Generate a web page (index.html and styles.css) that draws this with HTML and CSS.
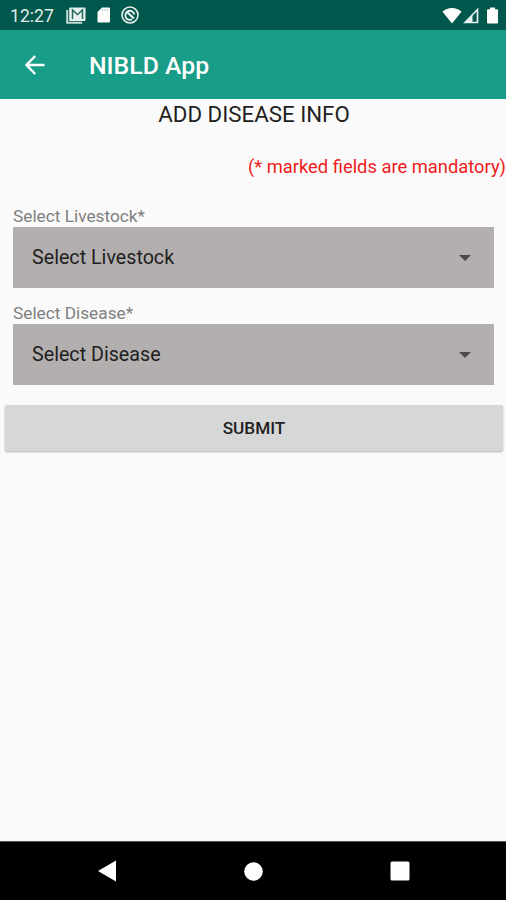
FILE: index.html
```
<!DOCTYPE html>
<html lang="en">

<head>
    <meta charset="UTF-8">
    <meta name="viewport" content="width=device-width, initial-scale=1.0">
    <title>NIBLD App</title>
    <link rel="stylesheet" href="styles.css">
</head>

<body>
    <div class="status-bar">
        <span class="clock">12:27</span>
        <svg class="icon-mail" width="20" height="17" viewBox="0 0 20 17">
            <path d="M1.2 3v12.8h15" fill="none" stroke="#c3dad6" stroke-width="2" />
            <rect x="3.2" y="0.5" width="16.3" height="13.5" rx="1" fill="#e6f0ee" />
            <path d="M6.5 12V3l5 4.500 5-4.500v9" fill="none" stroke="#22695f" stroke-width="1.5" />
        </svg>
        <svg class="icon-sd" width="14" height="16" viewBox="0 0 14 16">
            <path d="M5 0.5h7q1 0 1 1v13q0 1-1 1H1.5q-1 0-1-1V5z" fill="#fff" />
            <path d="M5.5 2v2M8 2v2M10.5 2v2" stroke="#a9c9c3" stroke-width="1" />
        </svg>
        <svg class="icon-sync" width="18" height="18" viewBox="0 0 18 18" fill="none" stroke="#e6f0ee">
            <circle cx="9" cy="9" r="8" stroke-width="1.6" />
            <path d="M11 13.300A4.500 4.500 0 1 1 13.300 8.500" stroke-width="2" />
            <path d="M6 6l7 6.500" stroke-width="2.2" />
        </svg>
        <div class="system-icons">
            <svg width="20" height="17" viewBox="0 0 20 17">
                <path d="M10 16.5L0.5 4.7Q4.5 1 10 1t9.5 3.7z" fill="#fff" />
            </svg>
            <svg class="icon-signal" width="16" height="17" viewBox="0 0 16 17">
                <path d="M2 15.5L14.5 2.5v13z" fill="none" stroke="#e6f0ee" stroke-width="1.7" />
                <path d="M9.5 8v7.5H2.5z" fill="#e6f0ee" />
            </svg>
            <svg class="icon-battery" width="11" height="17" viewBox="0 0 11 17">
                <path d="M3 0.5h5v1.7h2q1 0 1 1V15.5q0 1-1 1H1q-1 0-1-1V3.2q0-1 1-1h2z" fill="#fff" />
            </svg>
        </div>
    </div>

    <header class="app-bar">
        <svg class="back" width="20" height="20" viewBox="0 0 20 20">
            <path d="M19.5 10H2M10.2 1L1.5 10l8.7 9" fill="none" stroke="#fff" stroke-width="2.4" />
        </svg>
        <h1>NIBLD App</h1>
    </header>

    <main>
        <h2>ADD DISEASE INFO</h2>
        <p class="note">(* marked fields are mandatory)</p>

        <div class="field">
            <label>Select Livestock*</label>
            <div class="spinner">
                <span>Select Livestock</span>
                <svg width="12" height="6" viewBox="0 0 12 6">
                    <path d="M0 0h12L6 6z" fill="#4b4949" />
                </svg>
            </div>
        </div>

        <div class="field">
            <label>Select Disease*</label>
            <div class="spinner">
                <span>Select Disease</span>
                <svg width="12" height="6" viewBox="0 0 12 6">
                    <path d="M0 0h12L6 6z" fill="#4b4949" />
                </svg>
            </div>
        </div>

        <button class="submit">SUBMIT</button>
    </main>

    <nav class="nav-bar">
        <svg width="19" height="22" viewBox="0 0 19 22">
            <path d="M18 0.5v21L0 11z" fill="#fff" />
        </svg>
        <svg width="19" height="19" viewBox="0 0 19 19">
            <circle cx="9.5" cy="9.5" r="9.3" fill="#fff" />
        </svg>
        <svg width="20" height="20" viewBox="0 0 20 20">
            <rect x="0.5" y="0.5" width="19" height="19" rx="1.5" fill="#fff" />
        </svg>
    </nav>
</body>

</html>
```
FILE: styles.css
```
* {
    box-sizing: border-box;
}

body {
    font-family: Roboto, sans-serif;
    background: #fafafa;
    color: #1f1f1f;
    margin: 0;
    height: 900px;
    display: flex;
    flex-direction: column;
    overflow: hidden;
}

svg {
    display: block;
    flex: none;
}

.status-bar {
    background: #00574b;
    height: 30px;
    display: flex;
    align-items: center;
    padding: 0 8px 0 10px;
}

.clock {
    color: #e0ecea;
    width: 56px;
    font-size: 17.6px;
    line-height: 30px;
    padding-top: 2px;
}

.icon-sd {
    margin-left: 11px;
}

.icon-sync {
    margin-left: 10px;
}

.system-icons {
    display: flex;
    margin-left: auto;
}

.icon-signal {
    margin-left: 1px;
}

.icon-battery {
    margin-left: 8px;
}

/* toolbar */
.app-bar {
    background: #189d89;
    height: 69px;
    display: flex;
    align-items: center;
    padding: 0 0 0 25px;
}

.app-bar h1 {
    color: white;
    margin: 2px 0 0 44px;
    font-size: 24.8px;
    font-weight: 500;
}

main {
    flex: 1;
}

h2 {
    margin: 0;
    padding-left: 2px;
    text-align: center;
    font-size: 22.3px;
    font-weight: 400;
    line-height: 31px;
}

.note {
    margin: 22px 0 24px;
    color: #ee1c1c;
    text-align: right;
    font-size: 18.35px;
    line-height: 30px;
}

.field {
    margin: 0 12px 15px 13px;
}

.field label {
    display: block;
    color: #808080;
    font-size: 17.25px;
    line-height: 21px;
}

.spinner {
    background: #b3afaf;
    height: 61px;
    display: flex;
    align-items: center;
    justify-content: space-between;
    padding: 0 23px 0 19px;
    font-size: 19.7px;
}

.submit {
    display: block;
    width: 498px;
    height: 46px;
    margin: 20px 0 0 5px;
    background: #d6d8d7;
    border: none;
    border-radius: 2px;
    box-shadow: 0 1px 2px rgba(0, 0, 0, 0.3);
    color: #1f1f1f;
    font-family: Roboto, sans-serif;
    font-size: 17.2px;
    font-weight: 500;
}

/* system navigation */
.nav-bar {
    background: #000;
    border-top: 1px solid #555;
    height: 59px;
    display: flex;
    align-items: center;
    justify-content: space-between;
    padding: 0 96px 0 98px;
}
```
